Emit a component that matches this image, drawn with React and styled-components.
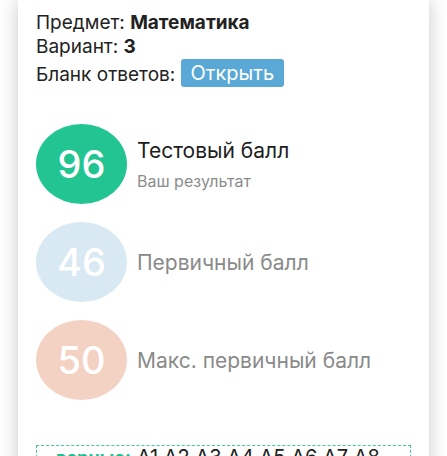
import React from "react"
import styled, { createGlobalStyle } from "styled-components"

const GlobalStyle = createGlobalStyle`
  html, body {
    margin: 0;
    padding: 0;
    background: #fff;
    font-family: Inter, "Noto Sans", sans-serif;
    overflow: hidden;
  }
`;

const Page = styled.div`
  padding: 0 18px;
  height: 456px;
  overflow: hidden;
`;

const Card = styled.div`
  background: #fff;
  box-shadow: 0 0 18px rgba(0, 0, 0, 0.22);
  padding: 11px 18px 40px;
  min-height: 600px;
`;

const InfoLine = styled.div`
  font-size: 19px;
  line-height: 24px;
  color: #222;

  b {
    font-weight: 700;
  }
`;

const OpenButton = styled.span`
  display: inline-block;
  background: #5aa8d6;
  color: #fff;
  border-radius: 3px;
  padding: 2px 10px;
  font-size: 20px;
  line-height: 24px;
  vertical-align: 1px;
`;

const ScoreList = styled.div`
  display: flex;
  flex-direction: column;
  gap: 18px;
  margin-top: 37px;
`;

const ScoreRow = styled.div`
  display: flex;
  align-items: center;
  gap: 10px;
`;

const Circle = styled.div`
  width: 91px;
  height: 80px;
  border-radius: 50%;
  background: ${p => p.$bg};
  color: #fff;
  display: flex;
  align-items: center;
  justify-content: center;
  font-size: 38px;
  font-weight: 500;
  flex-shrink: 0;
`;

const Texts = styled.div`
  display: flex;
  flex-direction: column;
  gap: 8px;
`;

const Title = styled.div`
  font-size: 21px;
  color: ${p => (p.$muted ? "#8a8a8a" : "#1e1e1e")};
`;

const Sub = styled.div`
  font-size: 16px;
  color: #8c8c8c;
`;

const AnswersBox = styled.div`
  margin-top: 45px;
  border: 1px dashed #3fc99f;
  padding: 0 19px;
  font-size: 20px;
  line-height: 22px;
  color: #222;
`;

const Correct = styled.span`
  color: #20c08d;
  font-size: 18px;
  font-weight: 700;
  margin-right: 6px;
`;

const scores = [
  { value: 96, bg: "#22c592", title: "Тестовый балл", sub: "Ваш результат" },
  { value: 46, bg: "#d8e9f3", title: "Первичный балл", muted: true },
  { value: 50, bg: "#f3d2c3", title: "Макс. первичный балл", muted: true },
];

export default function App() {
  return (
    <Page>
      <GlobalStyle />
      <Card>
        <InfoLine>Предмет: <b>Математика</b></InfoLine>
        <InfoLine>Вариант: <b>3</b></InfoLine>
        <InfoLine>Бланк ответов: <OpenButton>Открыть</OpenButton></InfoLine>

        <ScoreList>
          {scores.map(s => (
            <ScoreRow key={s.value}>
              <Circle $bg={s.bg}>{s.value}</Circle>
              <Texts>
                <Title $muted={s.muted}>{s.title}</Title>
                {s.sub && <Sub>{s.sub}</Sub>}
              </Texts>
            </ScoreRow>
          ))}
        </ScoreList>

        <AnswersBox>
          <Correct>верные:</Correct>
          A1 A2 A3 A4 A5 A6 A7 A8 A9 A10
        </AnswersBox>
      </Card>
    </Page>
  );
}
